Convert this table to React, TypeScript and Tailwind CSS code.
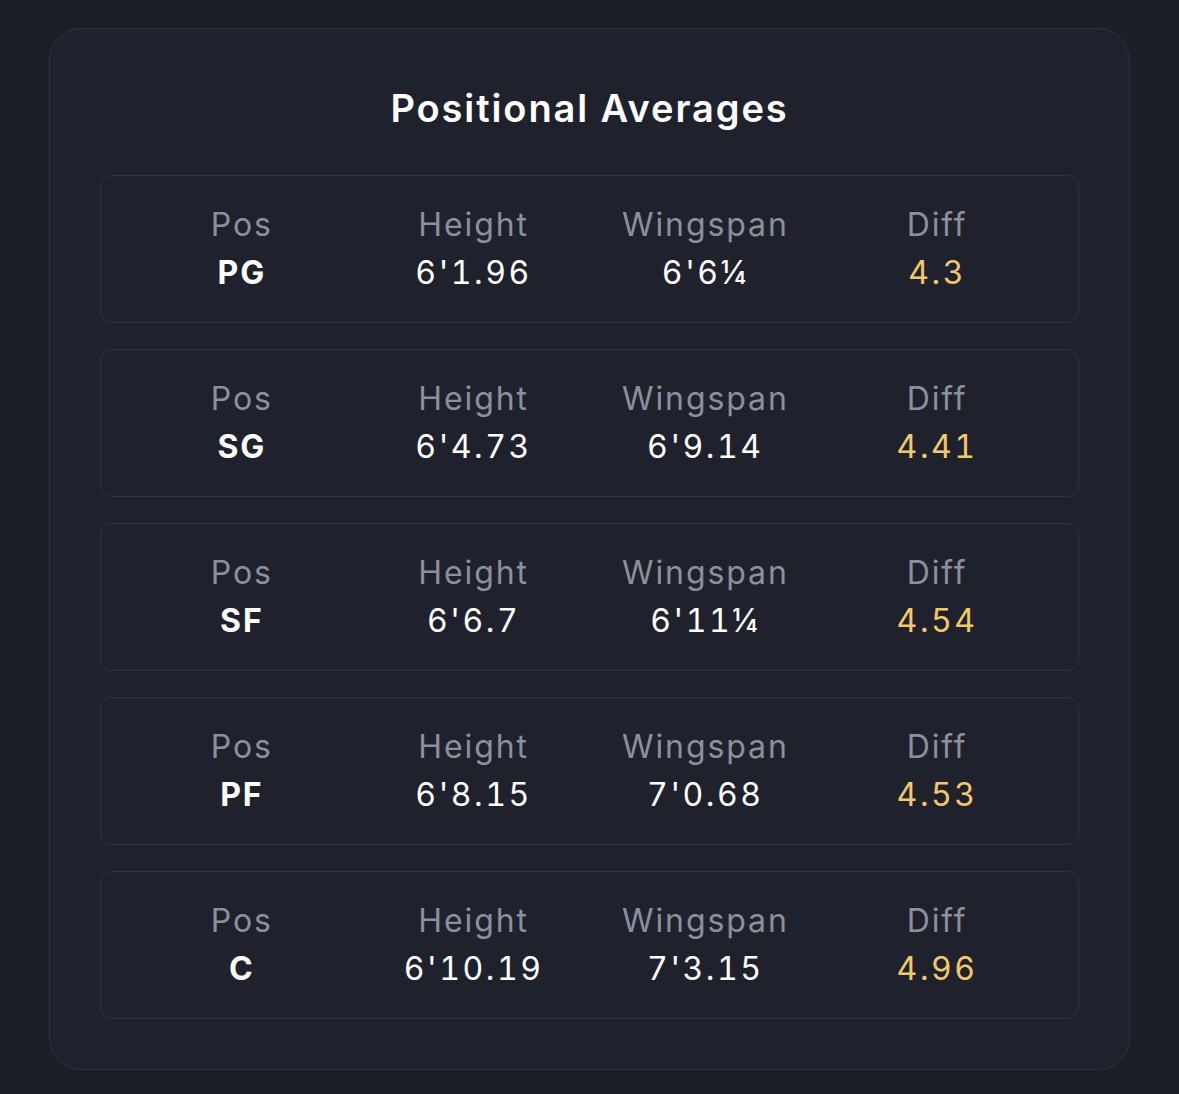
import React from 'react';

type Row = { pos: string; height: string; wingspan: string; diff: string };

const rows: Row[] = [
  { pos: 'PG', height: "6'1.96", wingspan: "6'6¼", diff: '4.3' },
  { pos: 'SG', height: "6'4.73", wingspan: "6'9.14", diff: '4.41' },
  { pos: 'SF', height: "6'6.7", wingspan: "6'11¼", diff: '4.54' },
  { pos: 'PF', height: "6'8.15", wingspan: "7'0.68", diff: '4.53' },
  { pos: 'C', height: "6'10.19", wingspan: "7'3.15", diff: '4.96' },
];

const Cell = ({ label, value, className }: { label: string; value: string; className: string }) => (
  <div className="flex flex-col items-center">
    <div className="text-[32px] leading-[48px] tracking-[0.06em] text-[#8b909c]">{label}</div>
    <div className={`text-[32px] leading-[48px] tabular-nums ${className}`}>{value}</div>
  </div>
);

export default function App() {
  return (
    <div
      className="min-h-[1094px] w-full bg-[#1c1f27] pt-[28px] px-[49px]"
      style={{ fontFamily: 'Inter, "Noto Sans", sans-serif' }}
    >
      <div className="rounded-[32px] border border-[#2e3340] bg-[#1f222c] px-[50px] pt-[50px] pb-[50px]">
        <h2 className="text-center text-[38px] leading-[58px] tracking-[0.05em] font-semibold text-white mb-[38px]">
          Positional Averages
        </h2>
        <div className="flex flex-col gap-[26px]">
          {rows.map((r) => (
            <div
              key={r.pos}
              className="grid grid-cols-4 rounded-[12px] border border-[#2e3340] px-[25px] py-[25px]"
            >
              <Cell label="Pos" value={r.pos} className="font-bold tracking-[0.06em] text-white" />
              <Cell label="Height" value={r.height} className="tracking-[0.08em] text-white" />
              <Cell label="Wingspan" value={r.wingspan} className="tracking-[0.08em] text-white" />
              <Cell label="Diff" value={r.diff} className="tracking-[0.08em] text-[#f1c86b]" />
            </div>
          ))}
        </div>
      </div>
    </div>
  );
}
